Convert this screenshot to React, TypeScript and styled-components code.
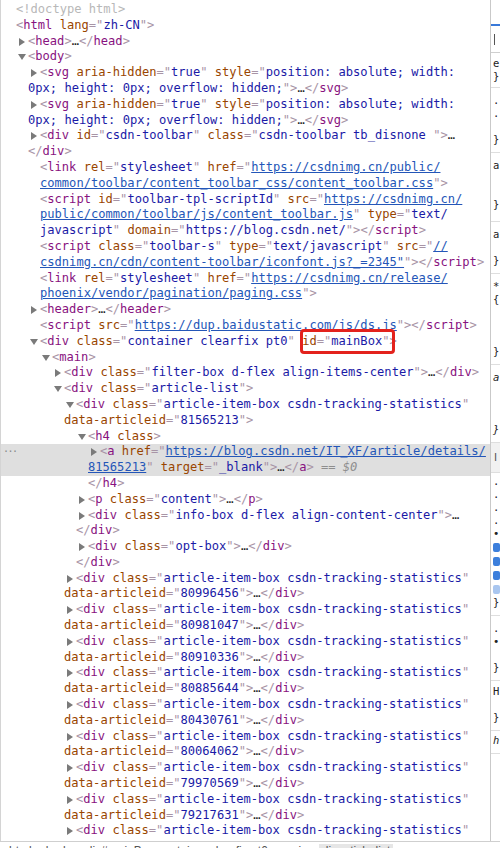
import React from "react";
import styled, { createGlobalStyle } from "styled-components";

const GlobalStyle = createGlobalStyle`
  html, body {
    margin: 0;
    padding: 0;
    background: #ffffff;
  }
  body {
    width: 500px;
    height: 848px;
    overflow: hidden;
  }
`;

type Kind = "t" | "n" | "a" | "v" | "l" | "x" | "d" | "g" | "i" | "b";
type Tok = [Kind, string];

type Line = {
  x: number;
  s: string;
  tri?: "r" | "d";
  sel?: boolean;
  dots?: boolean;
};

const colors: Record<Kind, string> = {
  t: "#a894a6",
  n: "#881280",
  a: "#994500",
  v: "#1a1aa6",
  l: "#2456b8",
  x: "#222222",
  d: "#b8b8b8",
  g: "#8e8e8e",
  i: "#8e8e8e",
  b: "#1a1aa6",
};

// tiny markup: {k:text} -> token of kind k, anything else is plain text
function parse(src: string): Tok[] {
  const out: Tok[] = [];
  const re = /\{(\w):([^}]*)\}/g;
  let last = 0;
  let m: RegExpExecArray | null;
  while ((m = re.exec(src))) {
    if (m.index > last) out.push(["x", src.slice(last, m.index)]);
    out.push([m[1] as Kind, m[2]]);
    last = re.lastIndex;
  }
  if (last < src.length) out.push(["x", src.slice(last)]);
  return out;
}

const ids = ["80996456", "80981047", "80910336", "80885644", "80430761", "80064062", "79970569", "79217631"];

const itemOpen = '{t:<}{n:div} {a:class}{t:="}{v:article-item-box csdn-tracking-statistics}{t:"}';

const lines: Line[] = [
  { x: 16, s: "{d:<!doctype html>}" },
  { x: 16, s: '{t:<}{n:html} {a:lang}{t:="}{v:zh-CN}{t:">}' },
  { x: 28, tri: "r", s: "{t:<}{n:head}{t:>}…{t:</}{n:head}{t:>}" },
  { x: 28, tri: "d", s: "{t:<}{n:body}{t:>}" },
  { x: 40, tri: "r", s: '{t:<}{n:svg} {a:aria-hidden}{t:="}{v:true}{t:"} {a:style}{t:="}{v:position: absolute; width:}' },
  { x: 28, s: '{v:0px; height: 0px; overflow: hidden;}{t:">}…{t:</}{n:svg}{t:>}' },
  { x: 40, tri: "r", s: '{t:<}{n:svg} {a:aria-hidden}{t:="}{v:true}{t:"} {a:style}{t:="}{v:position: absolute; width:}' },
  { x: 28, s: '{v:0px; height: 0px; overflow: hidden;}{t:">}…{t:</}{n:svg}{t:>}' },
  { x: 40, tri: "r", s: '{t:<}{n:div} {a:id}{t:="}{v:csdn-toolbar}{t:"} {a:class}{t:="}{v:csdn-toolbar tb_disnone }{t:">}…' },
  { x: 28, s: "{t:</}{n:div}{t:>}" },
  { x: 40, s: '{t:<}{n:link} {a:rel}{t:="}{v:stylesheet}{t:"} {a:href}{t:="}{l:https://csdnimg.cn/public/}' },
  { x: 40, s: '{l:common/toolbar/content_toolbar_css/content_toolbar.css}{t:">}' },
  { x: 40, s: '{t:<}{n:script} {a:id}{t:="}{v:toolbar-tpl-scriptId}{t:"} {a:src}{t:="}{l:https://csdnimg.cn/}' },
  { x: 40, s: '{l:public/common/toolbar/js/content_toolbar.js}{t:"} {a:type}{t:="}{v:text/}' },
  { x: 40, s: '{v:javascript}{t:"} {a:domain}{t:="}{v:https://blog.csdn.net/}{t:">}{t:</}{n:script}{t:>}' },
  { x: 40, s: '{t:<}{n:script} {a:class}{t:="}{v:toolbar-s}{t:"} {a:type}{t:="}{v:text/javascript}{t:"} {a:src}{t:="}{l://}' },
  { x: 40, s: '{l:csdnimg.cn/cdn/content-toolbar/iconfont.js?_=2345"}{t:">}{t:</}{n:script}{t:>}' },
  { x: 40, s: '{t:<}{n:link} {a:rel}{t:="}{v:stylesheet}{t:"} {a:href}{t:="}{l:https://csdnimg.cn/release/}' },
  { x: 40, s: '{l:phoenix/vendor/pagination/paging.css}{t:">}' },
  { x: 40, tri: "r", s: "{t:<}{n:header}{t:>}…{t:</}{n:header}{t:>}" },
  { x: 40, s: '{t:<}{n:script} {a:src}{t:="}{l:https://dup.baidustatic.com/js/ds.js}{t:">}{t:</}{n:script}{t:>}' },
  { x: 40, tri: "d", s: '{t:<}{n:div} {a:class}{t:="}{v:container clearfix pt0}{t:"} {b:mainBox}{t:>}' },
  { x: 52, tri: "d", s: "{t:<}{n:main}{t:>}" },
  { x: 64, tri: "r", s: '{t:<}{n:div} {a:class}{t:="}{v:filter-box d-flex align-items-center}{t:">}…{t:</}{n:div}{t:>}' },
  { x: 64, tri: "d", s: '{t:<}{n:div} {a:class}{t:="}{v:article-list}{t:">}' },
  { x: 76, tri: "d", s: itemOpen },
  { x: 64, s: '{a:data-articleid}{t:="}{v:81565213}{t:">}' },
  { x: 88, tri: "d", s: "{t:<}{n:h4} {a:class}{t:>}" },
  { x: 100, tri: "r", sel: true, dots: true, s: '{t:<}{n:a} {a:href}{t:="}{l:https://blog.csdn.net/IT_XF/article/details/}' },
  { x: 88, sel: true, s: '{l:81565213}{t:"} {a:target}{t:="}{v:_blank}{t:">}…{t:</}{n:a}{t:>}{g: == }{i:$0}' },
  { x: 88, s: "{t:</}{n:h4}{t:>}" },
  { x: 88, tri: "r", s: '{t:<}{n:p} {a:class}{t:="}{v:content}{t:">}…{t:</}{n:p}{t:>}' },
  { x: 88, tri: "r", s: '{t:<}{n:div} {a:class}{t:="}{v:info-box d-flex align-content-center}{t:">}…' },
  { x: 76, s: "{t:</}{n:div}{t:>}" },
  { x: 88, tri: "r", s: '{t:<}{n:div} {a:class}{t:="}{v:opt-box}{t:">}…{t:</}{n:div}{t:>}' },
  { x: 76, s: "{t:</}{n:div}{t:>}" },
  ...ids.flatMap((id): Line[] => [
    { x: 76, tri: "r", s: itemOpen },
    { x: 64, s: `{a:data-articleid}{t:="}{v:${id}}{t:">}…{t:</}{n:div}{t:>}` },
  ]),
  { x: 76, tri: "r", s: itemOpen },
];

const Page = styled.div`
  width: 500px;
  height: 848px;
  display: flex;
  flex-direction: column;
  overflow: hidden;
`;

const Split = styled.div`
  flex: 0 0 841px;
  display: flex;
  overflow: hidden;
`;

const ElementsPane = styled.div`
  flex: 0 0 489px;
  border-left: 1px solid #d4d4d4;
  padding-top: 2px;
  font-family: "DejaVu Sans Mono", Menlo, monospace;
  font-size: 12.1px;
  color: #222222;
  overflow: hidden;
`;

const Row = styled.div<{ $indent: number; $sel?: boolean }>`
  position: relative;
  height: 15.8px;
  line-height: 15.8px;
  padding-left: ${(p) => p.$indent - 1}px;
  white-space: pre;
  background: ${(p) => (p.$sel ? "#dfdfdf" : "transparent")};
`;

const Gutter = styled.span`
  position: absolute;
  left: 2px;
  top: -3px;
  font-size: 10px;
  letter-spacing: -1.5px;
  color: #8a8a8a;
`;

const Arrow = styled.span`
  display: inline-block;
  width: 10px;
  margin-left: -10px;
  vertical-align: top;
  height: 15.8px;
  position: relative;
`;

const TriRight = styled.span`
  position: absolute;
  left: 1px;
  top: 4px;
  width: 0;
  height: 0;
  border-left: 6px solid #7a7a7a;
  border-top: 4px solid transparent;
  border-bottom: 4px solid transparent;
`;

const TriDown = styled.span`
  position: absolute;
  left: 0;
  top: 5px;
  width: 0;
  height: 0;
  border-top: 6px solid #7a7a7a;
  border-left: 4px solid transparent;
  border-right: 4px solid transparent;
`;

const Tk = styled.span<{ $k: Kind }>`
  color: ${(p) => colors[p.$k]};
  text-decoration: ${(p) => (p.$k === "l" ? "underline" : "none")};
  font-style: ${(p) => (p.$k === "i" ? "italic" : "normal")};
`;

const Marked = styled.span`
  position: relative;
  display: inline-block;
  height: 15.8px;
  &::after {
    content: "";
    position: absolute;
    top: -5px;
    bottom: -4px;
    left: -2px;
    right: -5px;
    border: 3px solid #e3221d;
    border-radius: 4px;
  }
`;

function Code({ toks }: { toks: Tok[] }) {
  return (
    <>
      {toks.map(([k, s], i) =>
        k === "b" ? (
          <Marked key={i}>
            <Tk $k="a">id</Tk>
            <Tk $k="t">="</Tk>
            <Tk $k="v">{s}</Tk>
            <Tk $k="t">"</Tk>
          </Marked>
        ) : (
          <Tk key={i} $k={k}>
            {s}
          </Tk>
        )
      )}
    </>
  );
}

// ---- styles sidebar: only its first column of glyphs is in view ----

const StylesPane = styled.div`
  flex: 1;
  min-width: 0;
  border-left: 1px solid #c9c9c9;
  display: flex;
  flex-direction: column;
  font-family: "DejaVu Sans Mono", Menlo, monospace;
  font-size: 10.5px;
  color: #222222;
  overflow: hidden;
`;

const TabStrip = styled.div`
  height: 24px;
  border-bottom: 2px solid #3879d9;
`;

const Filter = styled.div`
  height: 26px;
  display: flex;
  align-items: center;
  padding-left: 3px;
  border-bottom: 1px solid #cfcfcf;
`;

const Caret = styled.span`
  width: 1px;
  height: 11px;
  background: #555;
`;

const Rule = styled.div<{ $pt: number; $pb: number; $italic?: boolean }>`
  padding: ${(p) => p.$pt}px 0 ${(p) => p.$pb}px 2px;
  border-bottom: 1px solid #dedede;
  font-style: ${(p) => (p.$italic ? "italic" : "normal")};
`;

const RuleLine = styled.div`
  height: 13px;
  line-height: 13px;
  white-space: pre;
`;

const Check = styled.div<{ $dim?: boolean }>`
  height: 14px;
  display: flex;
  align-items: center;
  &::before {
    content: "";
    width: 8px;
    height: 9px;
    border-radius: 2px;
    background: ${(p) => (p.$dim ? "#a9c6ef" : "#3c7fdc")};
  }
`;

const Inherited = styled.div`
  height: 29px;
  line-height: 29px;
  padding-left: 3px;
  background: #f1f1f1;
  border-bottom: 1px solid #dedede;
  font-family: "Liberation Sans", Arial, sans-serif;
  font-size: 11px;
  color: #555;
`;

const Crumbs = styled.div`
  flex: 1;
  border-top: 1px solid #cfcfcf;
  display: flex;
  gap: 8px;
  padding: 2px 0 0 6px;
  font-family: "Liberation Sans", Arial, sans-serif;
  font-size: 12px;
  color: #555;
  white-space: nowrap;
  overflow: hidden;
`;

const Crumb = styled.span<{ $sel?: boolean }>`
  padding: 0 3px;
  background: ${(p) => (p.$sel ? "#e6e6e6" : "transparent")};
`;

function StylesSide() {
  return (
    <StylesPane>
      <TabStrip />
      <Filter>
        <Caret />
      </Filter>
      <Rule $pt={4} $pb={4}>
        <RuleLine>e</RuleLine>
        <RuleLine>{"}"}</RuleLine>
      </Rule>
      <Rule $pt={6} $pb={6}>
        <RuleLine>.</RuleLine>
        <RuleLine>.</RuleLine>
        <RuleLine> </RuleLine>
        <RuleLine>{"}"}</RuleLine>
      </Rule>
      <Rule $pt={6} $pb={10}>
        <RuleLine>a</RuleLine>
        <RuleLine> </RuleLine>
        <RuleLine> </RuleLine>
        <RuleLine>{"}"}</RuleLine>
      </Rule>
      <Rule $pt={6} $pb={6}>
        <RuleLine>a</RuleLine>
        <RuleLine> </RuleLine>
        <RuleLine>{"}"}</RuleLine>
      </Rule>
      <Rule $pt={6} $pb={6}>
        <RuleLine>*</RuleLine>
        <RuleLine>{"{"}</RuleLine>
        <RuleLine> </RuleLine>
        <RuleLine> </RuleLine>
        <RuleLine> </RuleLine>
        <RuleLine>{"}"}</RuleLine>
      </Rule>
      <Rule $pt={6} $pb={6} $italic>
        <RuleLine>a</RuleLine>
        <RuleLine> </RuleLine>
        <RuleLine> </RuleLine>
        <RuleLine> </RuleLine>
        <RuleLine>{"}"}</RuleLine>
      </Rule>
      <Inherited>I</Inherited>
      <Rule $pt={2} $pb={6}>
        <RuleLine>.</RuleLine>
        <RuleLine>.</RuleLine>
        <RuleLine>.</RuleLine>
        <RuleLine>.</RuleLine>
        <RuleLine>•</RuleLine>
        <Check />
        <Check />
        <Check />
        <Check $dim />
        <RuleLine>{"}"}</RuleLine>
      </Rule>
      <Rule $pt={6} $pb={6}>
        <RuleLine>.</RuleLine>
        <RuleLine>•</RuleLine>
        <RuleLine> </RuleLine>
        <RuleLine>{"}"}</RuleLine>
      </Rule>
      <Rule $pt={4} $pb={6}>
        <RuleLine>H</RuleLine>
        <RuleLine> </RuleLine>
        <RuleLine>{"}"}</RuleLine>
      </Rule>
      <Rule $pt={3} $pb={6} $italic>
        <RuleLine>h</RuleLine>
      </Rule>
    </StylesPane>
  );
}

export default function App() {
  return (
    <>
      <GlobalStyle />
      <Page>
        <Split>
          <ElementsPane>
            {lines.map((ln, i) => (
              <Row key={i} $indent={ln.x} $sel={ln.sel}>
                {ln.dots && <Gutter>...</Gutter>}
                {ln.tri && <Arrow>{ln.tri === "r" ? <TriRight /> : <TriDown />}</Arrow>}
                <Code toks={parse(ln.s)} />
              </Row>
            ))}
          </ElementsPane>
          <StylesSide />
        </Split>
        <Crumbs>
          <Crumb>html</Crumb>
          <Crumb>body</Crumb>
          <Crumb>div#mainBox.container.clearfix.pt0</Crumb>
          <Crumb>main</Crumb>
          <Crumb $sel>div.article-list</Crumb>
        </Crumbs>
      </Page>
    </>
  );
}
